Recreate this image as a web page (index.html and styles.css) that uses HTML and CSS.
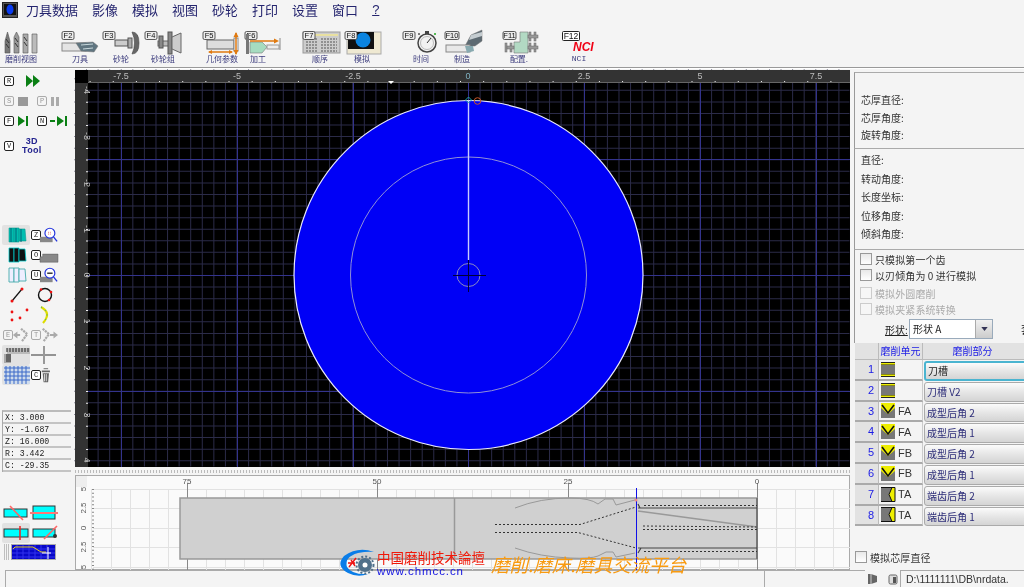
FILE: index.html
```html
<!DOCTYPE html>
<html lang="zh">
<head>
<meta charset="utf-8">
<title>刀具数据</title>
<link rel="stylesheet" href="styles.css">
</head>
<body>
<div class="app">
  <nav class="menubar">
    <svg class="logo" viewBox="0 0 16 16"><rect x=".5" y=".5" width="15" height="15" fill="#555" stroke="#222"/><rect x="2" y="2" width="12" height="11" fill="#111"/><ellipse cx="8" cy="7.500" rx="3.500" ry="5" fill="#0a3cf0"/></svg>
    <span class="menu">刀具数据</span><span class="menu">影像</span><span class="menu">模拟</span><span class="menu">视图</span><span class="menu">砂轮</span><span class="menu">打印</span><span class="menu">设置</span><span class="menu">窗口</span><span class="menu help">?</span>
  </nav>

  <div class="toolbar">
    <div class="tool">
      <svg viewBox="0 0 34 28"><g stroke="#555" stroke-width=".6"><path d="M1 24V12L3.500 3 6 12V24Z" fill="#777"/><path d="M10 24V8L12.500 3 15 8V24Z" fill="#999"/><path d="M19 24V5H24V24Z" fill="#aaa"/><path d="M28 24V5H33V24Z" fill="#bbb"/></g><path d="M2 10 5 14M2 15 5 19M11 9 14 13M11 14 14 18M20 8 23 12M20 13 23 17" stroke="#333"/></svg>
      <span class="tool-label">磨削视图</span>
    </div>
    <div class="tool g25">
      <svg viewBox="0 0 34 28"><rect x="-1" y="2.500" width="12" height="8" rx="1.500" class="badge"/><text x="5" y="9" class="badge-t">F2</text><rect x="-1" y="14" width="24" height="8" fill="#e4e4e4" stroke="#888"/><path d="M13 14 30 13 35 17 31 23 18 22Z" fill="#5f7580" stroke="#777" stroke-width=".5"/><path d="M18 16 30 15M20 20 30 19" stroke="#c8d8dc"/></svg>
      <span class="tool-label">刀具</span>
    </div>
    <div class="tool g7">
      <svg viewBox="0 0 34 28"><rect x="-1" y="2.500" width="12" height="8" rx="1.500" class="badge"/><text x="5" y="9" class="badge-t">F3</text><rect x="11" y="11" width="13" height="6" fill="#ccc" stroke="#555"/><rect x="24" y="9" width="4" height="10" fill="#aaa" stroke="#555"/><path d="M28 3Q33 14 28 25 35 25 35 14 35 3 28 3Z" fill="#666" stroke="#444" stroke-width=".6"/></svg>
      <span class="tool-label">砂轮</span>
    </div>
    <div class="tool g8">
      <svg viewBox="0 0 34 28"><rect x="-1" y="2.500" width="12" height="8" rx="1.500" class="badge"/><text x="5" y="9" class="badge-t">F4</text><rect x="12" y="12" width="12" height="5" fill="#bbb" stroke="#666"/><rect x="13" y="7" width="4" height="12" fill="#888" stroke="#555"/><rect x="22" y="3" width="4" height="22" fill="#888" stroke="#555"/><path d="M26 8 35 4V24L26 20Z" fill="#ccc" stroke="#666"/></svg>
      <span class="tool-label">砂轮组</span>
    </div>
    <div class="tool g25">
      <svg viewBox="0 0 34 28"><rect x="-2" y="2.500" width="12" height="8" rx="1.500" class="badge"/><text x="4" y="9" class="badge-t">F5</text><rect x="2" y="11" width="27" height="9" fill="#ddd" stroke="#666"/><rect x="29" y="9" width="4" height="13" fill="#fff" stroke="#888"/><path d="M4 23H27M31 4V25" stroke="#e07a10" stroke-width="1.500"/><path d="M3 23 7 21V25ZM28 23 24 21V25ZM31 3 28.500 8H33.500ZM31 26 28.500 21H33.500Z" fill="#e07a10"/></svg>
      <span class="tool-label">几何参数</span>
    </div>
    <div class="tool g2">
      <svg viewBox="0 0 34 28"><rect x="4" y="2.500" width="12" height="8" rx="1.500" class="badge"/><text x="10" y="9" class="badge-t">F6</text><rect x="5" y="5" width="3" height="20" fill="#777"/><path d="M9 13H21L26 18 21 24H9Z" fill="#a6dcc0" stroke="#777" stroke-width=".6"/><rect x="26" y="16" width="12" height="4" fill="#eee" stroke="#999"/><path d="M39 9V21" stroke="#888"/><path d="M9 12H35" stroke="#e07a10" stroke-width="1.500"/><path d="M38 12 33 9.500V14.500Z" fill="#e07a10"/></svg>
      <span class="tool-label">加工</span>
    </div>
    <div class="tool g28">
      <svg viewBox="0 0 34 28"><rect x="0" y="3" width="37" height="21" fill="#ccc" stroke="#999"/><rect x="2" y="5" width="33" height="2" fill="#e8e0a0"/><path d="M3 10H14M3 13H14M3 16H14M3 19H14M3 22H14M18 10H34M18 13H34M18 16H34M18 19H34M18 22H34" stroke="#555" stroke-dasharray="2 1"/><rect x="0" y="2.500" width="12" height="8" rx="1.500" class="badge"/><text x="6" y="9" class="badge-t">F7</text></svg>
      <span class="tool-label">顺序</span>
    </div>
    <div class="tool g8">
      <svg viewBox="0 0 34 28"><rect x="2" y="3" width="34" height="22" fill="#efe9d2" stroke="#aaa"/><rect x="3" y="3" width="26" height="17" fill="#111"/><circle cx="18" cy="11" r="7.500" fill="#0a84e0"/><rect x="0" y="2.500" width="12" height="8" rx="1.500" class="badge"/><text x="6" y="9" class="badge-t">F8</text></svg>
      <span class="tool-label">模拟</span>
    </div>
    <div class="tool g25">
      <svg viewBox="0 0 34 28"><circle cx="23" cy="14" r="9" fill="#f2f2f2" stroke="#444" stroke-width="1.500"/><circle cx="23" cy="14" r="6.500" fill="none" stroke="#bbb"/><path d="M23 14 27 9" stroke="#333"/><rect x="21" y="2" width="4" height="3" fill="#444"/><circle cx="31" cy="5" r="1" fill="#2a2"/><circle cx="15" cy="5" r="1" fill="#555"/><rect x="-1" y="2.500" width="12" height="8" rx="1.500" class="badge"/><text x="5" y="9" class="badge-t">F9</text></svg>
      <span class="tool-label">时间</span>
    </div>
    <div class="tool g7">
      <svg viewBox="0 0 34 28"><path d="M20 17 26 6 37 1V12L30 17Z" fill="#5d6a72" stroke="#777" stroke-width=".5"/><path d="M26 6 37 3V7L24 11Z" fill="#c4ccd0"/><rect x="1" y="16" width="24" height="7" fill="#e8e8e8" stroke="#888"/><path d="M20 17H28L29 22 22 24Z" fill="#88aab0"/><rect x="0" y="2.500" width="14" height="8" rx="1.500" class="badge"/><text x="7" y="9" class="badge-t">F10</text></svg>
      <span class="tool-label">制造</span>
    </div>
    <div class="tool g23">
      <svg viewBox="0 0 34 28"><path d="M12 13H18V3H26V24H12Z" fill="#b2d9c3" stroke="#777" stroke-width=".6"/><g fill="#999" stroke="#666" stroke-width=".5"><rect x="3" y="14" width="2" height="9"/><rect x="8" y="14" width="2" height="9"/><rect x="5" y="17" width="7" height="3"/><rect x="27" y="3" width="2" height="9"/><rect x="32" y="3" width="2" height="9"/><rect x="26" y="6" width="10" height="3"/><rect x="27" y="14" width="2" height="9"/><rect x="32" y="14" width="2" height="9"/><rect x="26" y="17" width="10" height="3"/></g><rect x="1" y="2.500" width="13" height="8" rx="1.500" class="badge"/><text x="7.500" y="9" class="badge-t">F11</text></svg>
      <span class="tool-label">配置.</span>
    </div>
    <div class="tool g26">
      <svg viewBox="0 0 34 28"><rect x=".5" y="2.500" width="17" height="9" rx="1" fill="#fff" stroke="#222"/><text x="9" y="10" class="badge-t big">F12</text><text x="11" y="22" class="nci">NCI</text></svg>
      <span class="tool-label mono">NCI</span>
    </div>
  </div>

  <div class="main">
    <aside class="left">
      <div class="run-row"><span class="key">R</span><svg class="run" viewBox="0 0 20 14"><path d="M1 1 8 7 1 13ZM8 1 15 7 8 13Z" fill="#0a7f14"/></svg></div>
      <div class="run-row"><span class="key off">S</span><svg class="mini" viewBox="0 0 12 12"><rect x="1" y="2" width="10" height="9" fill="#999"/></svg><span class="key off">P</span><svg class="mini" viewBox="0 0 12 12"><path d="M1 2H4V11H1ZM6 2H9V11H6Z" fill="#aaa"/></svg></div>
      <div class="run-row"><span class="key">F</span><svg class="mini" viewBox="0 0 12 12"><path d="M1 1 8 6 1 11ZM9 1H11V11H9Z" fill="#0a7f14"/></svg><span class="key">N</span><svg class="mini wide" viewBox="0 0 18 12"><path d="M0 5H5V7H0ZM7 1 14 6 7 11ZM15 1H17V11H15Z" fill="#0a7f14"/></svg></div>
      <div class="tool3d"><span class="key">V</span><span class="tool3d-text">3D<br>Tool</span></div>

      <div class="icons">
        <div class="ib on"><svg viewBox="0 0 28 20"><g fill="#00bdb0" stroke="#0a9a92" stroke-width=".6"><path d="M7 3H12V17H7Z"/><path d="M12 3H17V17H12Z"/><path d="M17 4H23L24 16H17Z"/></g><path d="M9 3V17M14 3V17M19 4V17" stroke="#067"/></svg></div>
        <div class="ib"><span class="key">Z</span><svg class="ib-s" viewBox="0 0 20 20"><rect x="0" y="12" width="14" height="6" fill="#888"/><circle cx="11" cy="8" r="5.500" fill="#fff" stroke="#23d" stroke-width="1.300"/><path d="M9 7H13M9 9H13" stroke="#d66" stroke-dasharray="1 1"/><path d="M15 12 19 17" stroke="#23d" stroke-width="1.500"/></svg></div>
        <div class="ib"><svg viewBox="0 0 28 20"><g fill="#111" stroke="#0cc" stroke-width=".8"><path d="M7 3H12V17H7Z"/><path d="M12 3H17V17H12Z"/><path d="M17 4H23L24 16H17Z"/></g></svg></div>
        <div class="ib"><span class="key">O</span><svg class="ib-s" viewBox="0 0 20 20"><path d="M0 12H3V9H20V18H0Z" fill="#888" stroke="#555" stroke-width=".5"/></svg></div>
        <div class="ib"><svg viewBox="0 0 28 20"><g fill="#eef" stroke="#4aa" stroke-width=".9"><path d="M7 3H12V17H7Z"/><path d="M12 3H17V17H12Z"/><path d="M17 4H23L24 16H17Z"/></g></svg></div>
        <div class="ib"><span class="key">U</span><svg class="ib-s" viewBox="0 0 20 20"><rect x="0" y="12" width="14" height="6" fill="#888"/><circle cx="11" cy="8" r="5.500" fill="#fff" stroke="#23d" stroke-width="1.300"/><path d="M8 8H14" stroke="#222" stroke-width="1.500"/><path d="M15 12 19 17" stroke="#23d" stroke-width="1.500"/></svg></div>
        <div class="ib"><svg viewBox="0 0 28 20"><path d="M10 16 20 4" stroke="#111" stroke-width="1.200"/><circle cx="10" cy="16" r="1.500" fill="#e11"/><circle cx="20" cy="4" r="1.500" fill="#e11"/></svg></div>
        <div class="ib"><svg viewBox="0 0 28 20"><circle cx="15" cy="10" r="6.500" fill="none" stroke="#111" stroke-width="1.400"/><circle cx="11" cy="4.500" r="1.300" fill="#e11"/><circle cx="21" cy="7" r="1.300" fill="#e11"/><circle cx="19" cy="15" r="1.300" fill="#e11"/></svg></div>
        <div class="ib"><svg viewBox="0 0 28 20"><g fill="#e11"><circle cx="10" cy="7" r="1.400"/><circle cx="25" cy="5" r="1.400"/><circle cx="10" cy="15" r="1.400"/><circle cx="18" cy="13" r="1.400"/></g></svg></div>
        <div class="ib"><svg viewBox="0 0 28 20"><path d="M11 2Q22 8 13 18" fill="none" stroke="#dd0" stroke-width="2.200"/><path d="M11 2Q22 8 13 18" fill="none" stroke="#19a" stroke-width="1" stroke-dasharray="1 4"/></svg></div>
        <div class="ib"><span class="key off">E</span><svg class="ib-s" viewBox="0 0 20 20"><path d="M1 10 6 6V14ZM6 9H9V11H6Z" fill="#aaa"/><path d="M10 3 17 9 11 17" fill="none" stroke="#aaa" stroke-width="2.400" stroke-dasharray="2.500 .8"/></svg></div>
        <div class="ib"><span class="key off">T</span><svg class="ib-s" viewBox="0 0 20 20"><path d="M3 3 10 9 4 17" fill="none" stroke="#aaa" stroke-width="2.400" stroke-dasharray="2.500 .8"/><path d="M11 9H15V11H11ZM20 10 15 6V14Z" fill="#aaa"/></svg></div>
        <div class="ib on"><svg viewBox="0 0 28 20"><rect x="5" y="3" width="23" height="6" fill="#bbb"/><rect x="2" y="9" width="7" height="9" fill="#aaa"/><path d="M5 7V3M8 7V3M11 7V3M14 7V3M17 7V3M20 7V3M23 7V3M26 7V3M4 10H9M4 12H9M4 14H9M4 16H9" stroke="#222"/></svg></div>
        <div class="ib"><svg viewBox="0 0 28 20"><path d="M1 10H26M14 1V19" stroke="#333"/><path d="M14 1V19" stroke="#999" stroke-width="2"/></svg></div>
        <div class="ib on"><svg viewBox="0 0 28 20"><rect x="2" y="1" width="26" height="18" fill="#cfdcec"/><path d="M4 1V19M8 1V19M12 1V19M16 1V19M20 1V19M24 1V19M2 3H28M2 7H28M2 11H28M2 15H28" stroke="#3b69c8"/></svg></div>
        <div class="ib"><span class="key">C</span><svg class="ib-s" viewBox="0 0 20 20"><path d="M2 5H11V7H2ZM3 8H10L9 18H4Z" fill="#666"/><path d="M4 3H9" stroke="#666"/><path d="M5 9V17M7 9V17" stroke="#ddd"/></svg></div>
      </div>

      <div class="readout">
        <div class="read-row">X: 3.000</div>
        <div class="read-row">Y: -1.687</div>
        <div class="read-row">Z: 16.000</div>
        <div class="read-row">R: 3.442</div>
        <div class="read-row">C: -29.35</div>
      </div>

      <div class="views">
        <div class="vb"><svg viewBox="0 0 28 20"><rect x="2" y="6" width="23" height="8" fill="#0ff" stroke="#333"/><path d="M8 3 21 17" stroke="#f66" stroke-width="1.600"/></svg></div>
        <div class="vb"><svg viewBox="0 0 28 20"><rect x="3" y="3" width="22" height="13" fill="#0ff" stroke="#333"/><path d="M0 10H28" stroke="#f77" stroke-width="2"/></svg></div>
        <div class="vb on"><svg viewBox="0 0 28 20"><rect x="2" y="6" width="24" height="8" fill="#0ff" stroke="#333"/><path d="M18 3V17" stroke="#e22" stroke-width="1.500"/></svg></div>
        <div class="vb"><svg viewBox="0 0 28 20"><rect x="3" y="6" width="22" height="8" fill="#0ff" stroke="#333"/><path d="M14 16 27 3" stroke="#f66" stroke-width="1.600"/><circle cx="25" cy="13" r="2" fill="#333"/></svg></div>
        <div class="mini-view">
          <svg viewBox="0 0 54 16"><g stroke="#888"><path d="M0 1H5M0 3H5M0 5H5M0 7H5M0 9H5M0 11H5M0 13H5M0 15H5" stroke-dasharray="1 1"/></g><rect x="7.500" y=".5" width="44" height="15" fill="#0808c8" stroke="#aaa"/><path d="M13 1V15M19 1V15M25 1V15M31 1V15M37 1V15M43 1V15M8 5H51M8 9H51M8 13H51" stroke="#33e"/><path d="M9 5 11 3H29L37 8H42" fill="none" stroke="#e8d020"/><path d="M38 9H47M44 3V15" stroke="#fff"/></svg>
        </div>
      </div>
    </aside>

    <section class="center">
      <svg class="plot" viewBox="0 0 775 397">
        <rect width="775" height="397" fill="#000"/>
        <line x1="11.025" y1="198" x2="775" y2="198" stroke="#2b2b48" stroke-width="397" stroke-dasharray="1 10.575"/>
        <line x1="387" y1="8.225" x2="387" y2="397" stroke="#2b2b48" stroke-width="775" stroke-dasharray="1 10.575"/>
        <path d="M46.500 0V397M162.500 0V397M278.500 0V397M393.500 0V397M509.500 0V397M625.500 0V397M741.500 0V397M0 89.500H775M0 205.500H775M0 321.500H775" stroke="#33338c"/>
        <rect x="13" y="0" width="762" height="13" fill="#333"/>
        <rect x="0" y="13" width="13" height="384" fill="#333"/>
        <rect width="13" height="13" fill="#000"/>
        <line x1="14.600" y1="12" x2="775" y2="12" stroke="#eee" stroke-width="2" stroke-dasharray="1 22.150"/>
        <line x1="12" y1="20.150" x2="12" y2="397" stroke="#eee" stroke-width="2" stroke-dasharray="1 10.575"/>
        <path d="M13 12.500H775" stroke="#666"/>
        <path d="M313 11H319L316 14Z" fill="#fff"/>
        <g class="ruler-t">
          <text x="46" y="9">-7.5</text><text x="162" y="9">-5</text><text x="278" y="9">-2.5</text><text x="393" y="9" class="zero">0</text><text x="509" y="9">2.5</text><text x="625" y="9">5</text><text x="741" y="9">7.5</text>
        </g>
        <g class="ruler-t side">
          <text transform="translate(9 20) rotate(90)">-4</text><text transform="translate(9 66) rotate(90)">-3</text><text transform="translate(9 113) rotate(90)">-2</text><text transform="translate(9 159) rotate(90)">-1</text><text transform="translate(9 205) rotate(90)">0</text><text transform="translate(9 251) rotate(90)">1</text><text transform="translate(9 298) rotate(90)">2</text><text transform="translate(9 345) rotate(90)">3</text><text transform="translate(9 390) rotate(90)">4</text>
        </g>
        <circle cx="393.500" cy="205" r="174.500" fill="#0000f6" stroke="#e8e8ff" stroke-width="1.200"/>
        <circle cx="393.500" cy="205" r="118" fill="none" stroke="#8f8fd8"/>
        <circle cx="393.500" cy="205" r="11.500" fill="none" stroke="#8a8ac4"/>
        <path d="M393.500 30V190" stroke="#c8ccff" stroke-width="1.400"/>
        <path d="M393.500 190V222M378 205.500H411" stroke="#000038"/>
        <path d="M393.500 27 396.500 30 393.500 33 390.500 30Z" fill="none" stroke="#21a5a8"/>
        <circle cx="402.500" cy="31" r="3.300" fill="none" stroke="#c4552a"/>
      </svg>
      <div class="dots"></div>
      <svg class="profile" viewBox="0 0 775 95">
        <rect x=".5" y=".5" width="774" height="94" fill="#fafafa" stroke="#aaa"/>
        <rect x="1" y="1" width="11" height="11" fill="#eee"/>
        <path d="M16.500 14V95M36.500 14V95M55.500 14V95M74.500 14V95M93.500 14V95M131.500 14V95M150.500 14V95M169.500 14V95M188.500 14V95M207.500 14V95M226.500 14V95M245.500 14V95M264.500 14V95M283.500 14V95M321.500 14V95M340.500 14V95M359.500 14V95M378.500 14V95M397.500 14V95M416.500 14V95M435.500 14V95M454.500 14V95M473.500 14V95M511.500 14V95M530.500 14V95M549.500 14V95M568.500 14V95M587.500 14V95M606.500 14V95M625.500 14V95M644.500 14V95M663.500 14V95M701.500 14V95M720.500 14V95M739.500 14V95M758.500 14V95M18 14.500H775M18 33.500H775M18 53.500H775M18 72.500H775M18 92.500H775" stroke="#e2e2e2"/>
        <path d="M112.500 8V95M302.500 8V95M493.500 8V95M682.500 8V95" stroke="#888"/>
        <rect x="105" y="23" width="577" height="61" fill="#d0d0d0" stroke="#999" stroke-width="1.500"/>
        <path d="M379.500 23V84" stroke="#999" stroke-width="1.500"/>
        <path d="M682 23V84" stroke="#777" stroke-width="2"/>
        <g fill="none" stroke="#999">
          <path d="M440 33Q465 23 495 23 515 23 523 29L530 24H538L541 30 560 25"/>
          <path d="M440 73Q465 82 495 83 515 84 523 81L531 77H538L541 82 560 78"/>
          <path d="M563 36 682 52" stroke-width="1.400"/>
        </g>
        <path d="M563 33H682M563 29 565 33M563 73H682M563 78 566 73" fill="none" stroke="#444" stroke-width="1.200"/>
        <g fill="none" stroke="#333" stroke-dasharray="2 2">
          <path d="M420 49.500H505L561 32"/>
          <path d="M569 30.500H682"/>
          <path d="M420 57.500H503L561 73"/>
          <path d="M569 76.500H682"/>
          <path d="M568 51 682 52"/>
          <path d="M568 54.500H682"/>
        </g>
        <path d="M561.500 13V95" stroke="#1010e8"/>
        <circle cx="561" cy="25" r="1.500" fill="#e88"/>
        <g class="ruler-l">
          <text x="112" y="9">75</text><text x="302" y="9">50</text><text x="493" y="9">25</text><text x="682" y="9">0</text>
          <text transform="translate(11 14) rotate(-90)">5</text><text transform="translate(11 33) rotate(-90)">2.5</text><text transform="translate(11 53) rotate(-90)">0</text><text transform="translate(11 72) rotate(-90)">2.5</text><text transform="translate(11 92) rotate(-90)">5</text>
        </g>
        <line x1="18" y1="14" x2="18" y2="95" stroke="#888" stroke-width="2" stroke-dasharray="1 2.800"/>
      </svg>
      <div class="watermark">
        <svg class="wm-logo" viewBox="0 0 38 28"><path d="M36 3Q20 -3 6 7 -3 17 10 24 20 29 30 25 14 26 9 18 6 8 20 4 30 2 36 3Z" fill="#0a7de8"/><path d="M11 18 18 9M13 11 17 17M10 14H17" stroke="#e11" stroke-width="1.400"/><circle cx="27" cy="16" r="7" fill="#50708a"/><circle cx="27" cy="16" r="8.500" fill="none" stroke="#50708a" stroke-width="2" stroke-dasharray="2 2"/><circle cx="27" cy="16" r="2.500" fill="#fff"/></svg>
        <div class="wm-site"><span class="wm-name">中国磨削技术論壇</span><span class="wm-url">www.chmcc.cn</span></div>
        <span class="wm-slogan">磨削.磨床.磨具交流平台</span>
      </div>
    </section>

    <aside class="right">
      <div class="box box1">
        <span class="lbl">芯厚直径:</span><span class="lbl">芯厚角度:</span><span class="lbl">旋转角度:</span>
      </div>
      <div class="box box2">
        <span class="lbl">直径:</span><span class="lbl">转动角度:</span><span class="lbl">长度坐标:</span><span class="lbl">位移角度:</span><span class="lbl">倾斜角度:</span>
      </div>
      <div class="box box3">
        <label class="chk"><span class="cb"></span>只模拟第一个齿</label>
        <label class="chk"><span class="cb"></span>以刃倾角为 0 进行模拟</label>
        <label class="chk off"><span class="cb"></span>模拟外圆磨削</label>
        <label class="chk off"><span class="cb"></span>模拟夹紧系统转换</label>
        <div class="shape">
          <span class="shape-l">形状:</span>
          <span class="select">形状 A<span class="arrow"><svg viewBox="0 0 8 5"><path d="M0 0H8L4 5Z" fill="#335"/></svg></span></span>
          <span class="cut">套</span>
        </div>
      </div>
      <div class="grid">
        <div class="hd"></div><div class="hd blue">磨削单元</div><div class="hd blue wide">磨削部分</div>

        <div class="num">1</div><div class="unit"><svg viewBox="0 0 14 15"><rect width="14" height="15" fill="#222"/><rect y="1" width="14" height="1.500" fill="#ee0"/><rect y="3" width="14" height="9" fill="#777"/><rect y="12.500" width="14" height="1.500" fill="#ee0"/></svg></div><div class="btn focus">刀槽</div>
        <div class="num">2</div><div class="unit"><svg viewBox="0 0 14 15"><rect width="14" height="15" fill="#222"/><rect y="1" width="14" height="1.500" fill="#ee0"/><rect y="3" width="14" height="9" fill="#777"/><rect y="12.500" width="14" height="1.500" fill="#ee0"/></svg></div><div class="btn">刀槽 V2</div>
        <div class="num">3</div><div class="unit"><svg viewBox="0 0 14 15"><rect width="14" height="15" fill="#777"/><path d="M0 0H14V5L7 11 0 5Z" fill="#ee0"/><path d="M1 2 7 10 13 2" fill="none" stroke="#111" stroke-width="1.600"/></svg>FA</div><div class="btn">成型后角 2</div>
        <div class="num">4</div><div class="unit"><svg viewBox="0 0 14 15"><rect width="14" height="15" fill="#777"/><path d="M0 0H14V5L7 11 0 5Z" fill="#ee0"/><path d="M1 2 7 10 13 2" fill="none" stroke="#111" stroke-width="1.600"/></svg>FA</div><div class="btn">成型后角 1</div>
        <div class="num">5</div><div class="unit"><svg viewBox="0 0 14 15"><rect width="14" height="15" fill="#777"/><path d="M0 0H14V5L7 11 0 5Z" fill="#ee0"/><path d="M1 2 7 10 13 2" fill="none" stroke="#111" stroke-width="1.600"/></svg>FB</div><div class="btn">成型后角 2</div>
        <div class="num">6</div><div class="unit"><svg viewBox="0 0 14 15"><rect width="14" height="15" fill="#777"/><path d="M0 0H14V5L7 11 0 5Z" fill="#ee0"/><path d="M1 2 7 10 13 2" fill="none" stroke="#111" stroke-width="1.600"/></svg>FB</div><div class="btn">成型后角 1</div>
        <div class="num">7</div><div class="unit"><svg viewBox="0 0 14 15"><rect width="14" height="15" fill="#777"/><path d="M11 .5 8 7.500 11 14.500H14V.5Z" fill="#ee0" stroke="#111"/><path d="M0 .5H11M0 14.500H11" stroke="#111"/></svg>TA</div><div class="btn">端齿后角 2</div>
        <div class="num">8</div><div class="unit"><svg viewBox="0 0 14 15"><rect width="14" height="15" fill="#777"/><path d="M11 .5 8 7.500 11 14.500H14V.5Z" fill="#ee0" stroke="#111"/><path d="M0 .5H11M0 14.500H11" stroke="#111"/></svg>TA</div><div class="btn">端齿后角 1</div>
      </div>
      <label class="chk core"><span class="cb"></span>模拟芯厚直径</label>
    </aside>
  </div>

  <footer class="status">
    <div class="st st-main"></div>
    <div class="st st-mid"></div>
    <svg class="st-ic" viewBox="0 0 10 12"><path d="M0 1H3L9 3V9L3 11H0Z" fill="#666"/><path d="M3 1V11" stroke="#ccc"/></svg>
    <svg class="st-ic" viewBox="0 0 10 12"><rect x="1" y="2" width="8" height="9" rx="1.500" fill="#ddd" stroke="#666"/><rect x="5" y="4" width="3" height="6" fill="#555"/></svg>
    <div class="st st-path">D:\1111111\DB\nrdata.</div>
  </footer>
</div>
</body>
</html>
```

FILE: styles.css
```css
* { box-sizing: border-box; }
html, body { margin: 0; padding: 0; background: #f4f4f4; }
body { width: 1024px; height: 587px; overflow: hidden; font-family: "Noto Sans CJK SC", "Liberation Sans", sans-serif; }
svg { display: block; overflow: visible; }
.app { width: 1024px; height: 587px; display: flex; flex-direction: column; overflow: hidden; position: relative; background: #f4f4f4; filter: blur(.45px); }

.menubar { height: 19px; display: flex; align-items: center; padding-left: 2px; gap: 14px; color: #24246e; font-size: 13px; line-height: 19px; flex: none; }
.logo { width: 16px; height: 16px; margin-right: -6px; }
.menu { white-space: nowrap; }
.help { text-decoration: underline; font-family: "Liberation Sans", sans-serif; }

.toolbar { height: 48px; display: flex; padding: 10px 0 0 4px; flex: none; }
.tool { width: 34px; display: flex; flex-direction: column; align-items: center; flex: none; }
.tool svg { width: 34px; height: 28px; flex: none; }
.tool-label { font-size: 8px; line-height: 10px; margin-top: -3px; color: #3a3a7c; white-space: nowrap; }
.tool-label.mono { font-family: "Liberation Mono", monospace; }
.g2 { margin-left: 2px; } .g7 { margin-left: 7px; } .g8 { margin-left: 8px; } .g23 { margin-left: 23px; }
.g25 { margin-left: 25px; } .g26 { margin-left: 26px; } .g28 { margin-left: 28px; }
.badge { fill: #ececec; stroke: #333; stroke-width: .8; }
.badge-t { font: 7.500px "Liberation Sans", sans-serif; text-anchor: middle; fill: #111; }
.badge-t.big { font-size: 8.500px; }
.nci { font: italic bold 12px "Liberation Sans", sans-serif; fill: #f00014; }

.main { height: 503px; border-top: 1px solid #999; box-shadow: inset 0 1px 0 #fff; display: flex; flex: none; padding-top: 2px; }

.left { width: 75px; flex: none; padding-top: 1px; display: flex; flex-direction: column; }
.run-row { height: 20px; display: flex; align-items: center; padding-left: 4px; gap: 3px; flex: none; }
.key { width: 10px; height: 10px; flex: none; border: 1px solid #222; border-radius: 2px; background: #fff; color: #222; font: 7px/8px "Liberation Mono", monospace; text-align: center; }
.key.off { border-color: #aaa; color: #999; background: #f4f4f4; }
.run { width: 20px; height: 14px; margin-left: 8px; }
.mini { width: 12px; height: 12px; margin-right: 5px; }
.mini.wide { width: 18px; margin-right: 0; }
.tool3d { height: 30px; display: flex; align-items: center; padding-left: 4px; flex: none; }
.tool3d-text { font: bold 9px/9px "Liberation Sans", sans-serif; color: #23238f; text-align: center; margin-left: 8px; letter-spacing: .3px; }

.icons { margin-top: 64px; margin-left: 2px; display: grid; grid-template-columns: 28px 28px; grid-auto-rows: 20px; flex: none; }
.ib { display: flex; align-items: center; border-radius: 2px; }
.ib.on { background: #e2e2e2; }
.ib svg { width: 28px; height: 20px; flex: none; }
.ib .key { margin-left: 1px; }
.ib svg.ib-s { width: 18px; height: 18px; margin-left: -1px; }

.readout { margin: 25px 0 0 2px; width: 69px; border-left: 1px solid #aaa; border-top: 2px solid #bbb; flex: none; }
.read-row { height: 12px; border-bottom: 2px solid #c4c4c4; font: 8.200px/11px "Liberation Mono", monospace; color: #222; padding-left: 2px; white-space: pre; overflow: hidden; }

.views { margin: 31px 0 0 2px; display: grid; grid-template-columns: 28px 28px; grid-auto-rows: 20px; flex: none; }
.vb svg { width: 28px; height: 20px; }
.vb.on { background: #e2e2e2; border-radius: 2px; }
.mini-view { grid-column: 1 / 3; padding: 1px 0 0 2px; }
.mini-view svg { width: 54px; height: 16px; }

.center { width: 775px; flex: none; display: flex; flex-direction: column; position: relative; }
.plot { width: 775px; height: 397px; flex: none; }
.ruler-t text { font: 9px "Liberation Sans", sans-serif; fill: #bdbdbd; text-anchor: middle; }
.ruler-t .zero { fill: #7fb0c0; }
.dots { height: 8px; flex: none; margin-top: 3px; background: repeating-linear-gradient(90deg, #bbb 0 1px, transparent 1px 3px) 0 0 / 100% 3px no-repeat; }
.profile { width: 775px; height: 95px; flex: none; margin-top: -3px; }
.ruler-l text { font: 8px "Liberation Sans", sans-serif; fill: #555; text-anchor: middle; }

.watermark { position: absolute; left: 263px; top: 479px; display: flex; align-items: flex-start; }
.wm-logo { width: 38px; height: 28px; flex: none; }
.wm-site { display: flex; flex-direction: column; margin-left: 1px; }
.wm-name { font-size: 13.500px; line-height: 17px; color: #f01808; white-space: nowrap; }
.wm-url { font: 11.500px/10px "Liberation Sans", sans-serif; letter-spacing: .9px; color: #1414e0; }
.wm-slogan { font-size: 18.500px; line-height: 24px; margin: 3px 0 0 6px; color: #f89a10; font-style: italic; white-space: nowrap; }

.right { width: 171px; margin-left: 3px; flex: none; display: flex; flex-direction: column; font-size: 10px; color: #333; overflow: hidden; }
.box { border-top: 1px solid #aaa; border-left: 1px solid #999; margin-left: 1px; display: flex; flex-direction: column; padding-left: 6px; flex: none; }
.box1 { margin-top: 2px; height: 76px; padding-top: 19px; gap: 1.500px; }
.box2 { height: 101px; padding-top: 3px; gap: 2.500px; }
.box3 { height: 94px; padding-top: 1px; padding-left: 5px; }
.lbl { line-height: 16px; height: 16px; white-space: nowrap; }
.chk { display: flex; align-items: center; height: 16px; gap: 3px; white-space: nowrap; font-size: 10px; letter-spacing: .1px; }
.chk:nth-child(3) { margin-top: 2px; }
.chk.off { color: #aaa; }
.cb { width: 12px; height: 12px; flex: none; border: 1px solid #999; background: linear-gradient(#e8e8e8, #fff); }
.chk.off .cb { border-color: #ccc; background: #f6f6f6; }
.shape { display: flex; align-items: center; height: 20px; margin-top: 2px; padding-left: 25px; width: 200px; }
.shape-l { text-decoration: underline; width: 24px; flex: none; color: #222; }
.select { width: 84px; height: 20px; flex: none; background: #fff; border: 1px solid #9ab; padding-left: 3px; line-height: 17px; display: flex; justify-content: space-between; color: #222; }
.arrow { width: 17px; height: 18px; flex: none; background: linear-gradient(#f0f0f0, #ccc); border-left: 1px solid #aaa; display: flex; align-items: center; justify-content: center; }
.arrow svg { width: 7px; height: 4px; }
.cut { margin-left: 28px; color: #111; font-size: 11px; }

.grid { margin-left: 2px; display: grid; grid-template-columns: 24px 44px 120px; grid-template-rows: 17px repeat(8, 20.800px); flex: none; }
.hd { background: #e2e2e2; border-right: 1px solid #bbb; border-bottom: 1px solid #bbb; text-align: center; line-height: 16px; }
.hd.blue { color: #1a1ae6; }
.hd.wide { padding-right: 20px; }
.num { background: #e2e2e2; border-right: 1px solid #bbb; border-bottom: 2px solid #aaa; color: #1a1ae6; text-align: right; padding-right: 4px; font: 11px/19px "Liberation Sans", sans-serif; }
.unit { display: flex; align-items: center; gap: 3px; padding-left: 2px; border-bottom: 2px solid #aaa; border-right: 1px solid #ccc; font: 11px "Liberation Sans", sans-serif; color: #333; }
.unit svg { width: 14px; height: 15px; flex: none; }
.btn { margin: 1px 0 0 1px; border: 1px solid #aaa; border-radius: 3px; background: linear-gradient(#fbfbfb, #e6e6e6 50%, #d4d4d4); color: #2c2c78; line-height: 17px; padding-left: 2px; white-space: nowrap; }
.btn.focus { border: 2px solid #4ab4d0; line-height: 15px; color: #222; }
.chk.core { margin: 23px 0 0 2px; }

.status { flex: 1; display: flex; align-items: stretch; padding-left: 5px; min-height: 0; }
.st { border-top: 1px solid #aaa; border-left: 1px solid #aaa; flex: none; }
.st-main { width: 759px; }
.st-mid { width: 101px; }
.st-ic { width: 10px; height: 12px; flex: none; margin: 3px 0 0 3px; }
.st-ic + .st-ic { margin-left: 10px; }
.st-path { margin-left: 2px; flex: 1; font: 10.500px/16px "Liberation Sans", sans-serif; color: #333; padding-left: 5px; white-space: nowrap; overflow: hidden; }
```
